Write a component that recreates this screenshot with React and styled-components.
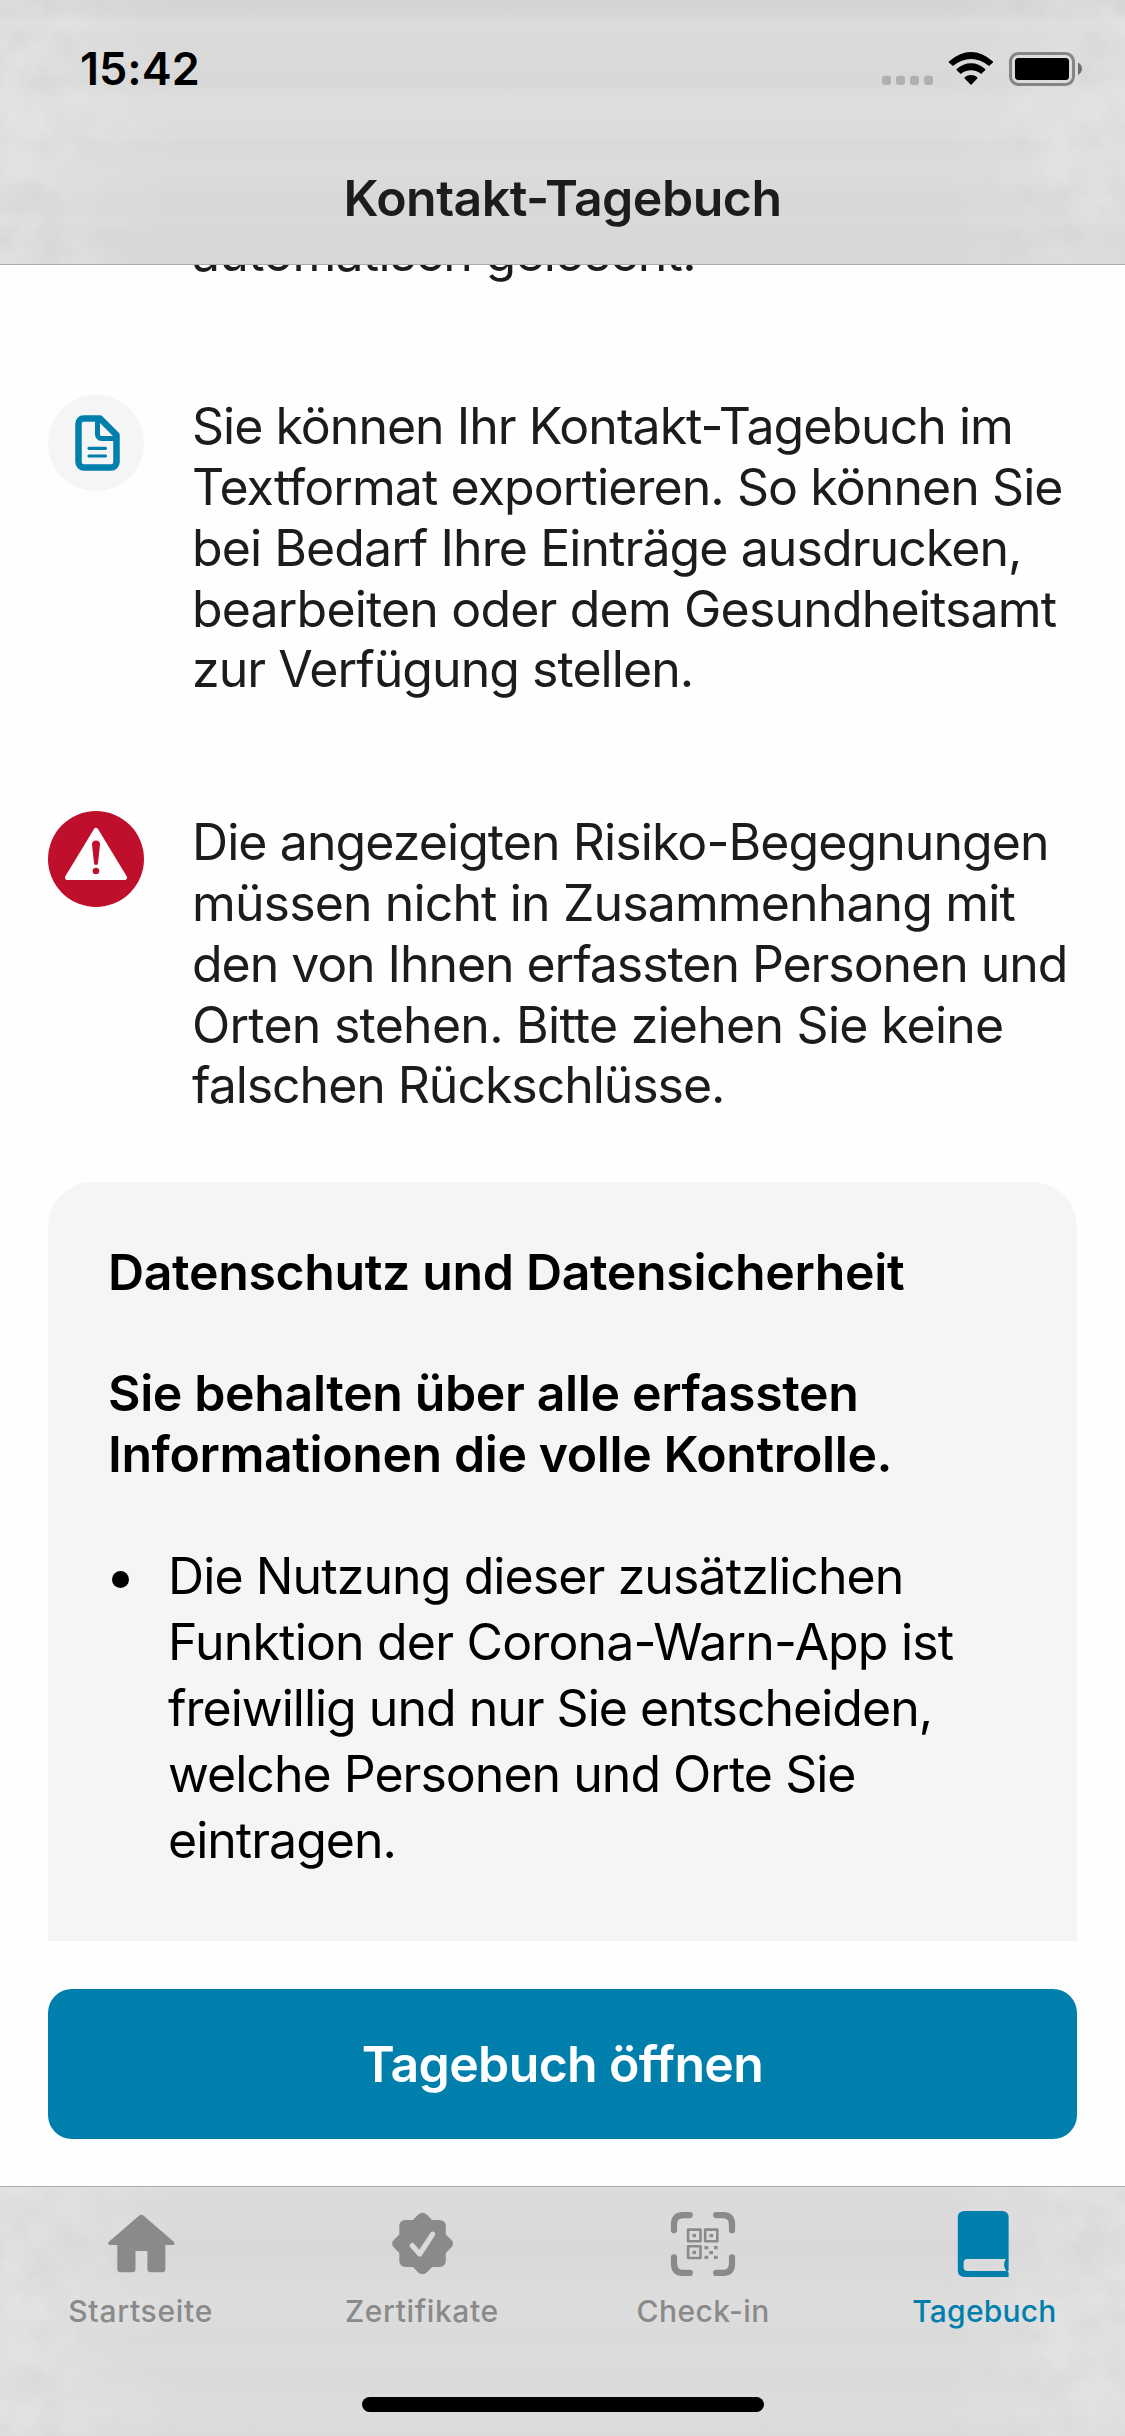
import React from "react";
import styled, { createGlobalStyle } from "styled-components";

const Global = createGlobalStyle`
  * { box-sizing: border-box; }
  body {
    margin: 0; background: #fff; font-family: Inter, "Liberation Sans", sans-serif;
    font-variant-ligatures: none;
  }
`;
const Screen = styled.div`
  width: 1125px; height: 2436px; overflow: hidden;
  display: flex; flex-direction: column; background: #fefefe;
`;
const barStripes = `
  linear-gradient(180deg, #d4d4d4 0, #d5d5d5 13px, #dcdcdc 22px, #dbdbdb 30px, #d9d9d9 36px, #dadada 62px,
    #d8d8d8 82px, #dedede 98px, #dcdcdc 138px, #dadada 142px, #dcdcdc 172px, #d8d8d8 196px, #d8d8d8 210px,
    #dadada 220px, #d7d7d7 232px, #d8d8d8 264px)`;
const Header = styled.header`
  position: relative; height: 265px; flex: none; display: flex; flex-direction: column;
  background: ${barStripes}; border-bottom: 1px solid #acacac;
`;
const GrainLayer = styled.svg`
  position: absolute; inset: 0; width: 100%; height: 100%; opacity: 0.4;
`;
const StatusBar = styled.div`
  position: relative; height: 132px; flex: none; padding: 50px 42px 0 80px;
  display: flex; align-items: flex-start; justify-content: space-between;
`;
const Clock = styled.span`
  font-size: 45px; line-height: 38px; font-weight: 600; color: #000;
  letter-spacing: ${(p) => p.$ls}px;
`;
const StatusIcons = styled.svg`
  width: 201px; height: 38px; display: block;
`;
const Title = styled.h1`
  position: relative; margin: 0; height: 132px; text-align: center; color: #1a1c1d;
  font-size: 50px; line-height: 132px; font-weight: 600; letter-spacing: ${(p) => p.$ls}px;
`;
const Content = styled.main`
  height: 1676px; flex: none; overflow: hidden; padding: 0 48px;
  display: flex; flex-direction: column;
`;
const Entry = styled.section`
  display: flex; gap: 48px; flex: none; margin-top: ${(p) => p.$top}px; height: ${(p) => p.$height}px;
`;
const IconSlot = styled.div`
  width: 96px; flex: none;
  svg { display: block; width: 96px; height: 96px; }
`;
const Lines = styled.div`
  display: flex; flex-direction: column; padding-top: ${(p) => p.$pad || 0}px;
`;
const Line = styled.span`
  display: block; white-space: pre; color: ${(p) => p.$color || "#1a1c1d"};
  font-size: 50px; font-weight: ${(p) => p.$weight || 400};
  line-height: ${(p) => p.$lh || 60.86}px; letter-spacing: ${(p) => p.$ls || 0}px;
`;
const Card = styled.section`
  flex: none; margin-top: 65px; height: 900px; padding: 60px 60px 0; border-radius: 45px; background: #f5f5f5;
  display: flex; flex-direction: column; gap: 60px;
`;
const Bullet = styled.div`
  display: grid; grid-template-columns: 60px 1fr; margin-top: -2px;
`;
const Dot = styled.i`
  width: 17px; height: 17px; border-radius: 50%; background: #000; margin: 28px 0 0 4px;
`;
const Footer = styled.div`
  height: 245px; flex: none; padding: 48px 48px 0;
`;
const Action = styled.button`
  display: block; width: 100%; height: 150px; border: 0; border-radius: 24px; padding: 0;
  background: #007fad; color: #fff; font: 600 50px/150px Inter, "Liberation Sans", sans-serif;
  font-variant-ligatures: none; letter-spacing: ${(p) => p.$ls}px;
`;
const TabBar = styled.nav`
  position: relative; height: 250px; flex: none; border-top: 1px solid #acacac;
  display: flex; flex-direction: column; align-items: center;
  background: linear-gradient(180deg, #dcdcdc 0, #dadada 15px, #dbdbdb 40px, #d8d8d8 60px, #dadada 85px,
    #dddddd 120px, #dadada 150px, #dcdcdc 165px, #dadada 190px, #dddddd 225px, #dadada 249px);
`;
const Tabs = styled.div`
  position: relative; width: 100%; height: 210px; display: grid; grid-template-columns: repeat(4, 281.25px);
`;
const Tab = styled.div`
  display: flex; flex-direction: column; align-items: center; padding-top: 18px;
  color: ${(p) => (p.$active ? "#007fad" : "#8a8a8a")};
  svg { width: 78px; height: 78px; display: block; }
`;
const TabLabel = styled.span`
  margin-top: 10px; font-size: 30px; line-height: 36px; font-weight: 500; letter-spacing: ${(p) => p.$ls}px;
`;
const HomeIndicator = styled.div`
  position: relative; width: 402px; height: 15px; border-radius: 8px; background: #000;
`;

function Grain({ id, height }) {
  return (
    <GrainLayer viewBox={`0 0 1125 ${height}`} preserveAspectRatio="none" aria-hidden="true">
      <defs>
        <filter id={`${id}-noise`} x="0" y="0" width="100%" height="100%">
          <feTurbulence type="fractalNoise" baseFrequency="0.028" numOctaves="3" seed="7" />
          <feColorMatrix values="0 0 0 0 0.91  0 0 0 0 0.91  0 0 0 0 0.91  1.5 0 0 0 -0.35" />
        </filter>
        <linearGradient id={`${id}-fade`}>
          <stop offset="0" stopColor="#fff" />
          <stop offset="0.06" stopColor="#fff" stopOpacity="0.85" />
          <stop offset="0.16" stopColor="#fff" stopOpacity="0" />
          <stop offset="0.84" stopColor="#fff" stopOpacity="0" />
          <stop offset="0.94" stopColor="#fff" stopOpacity="0.85" />
          <stop offset="1" stopColor="#fff" />
        </linearGradient>
        <mask id={`${id}-mask`}>
          <rect width="1125" height={height} fill={`url(#${id}-fade)`} />
        </mask>
      </defs>
      <g mask={`url(#${id}-mask)`}>
        <rect width="1125" height={height} filter={`url(#${id}-noise)`} />
      </g>
    </GrainLayer>
  );
}

const DocumentIcon = () => (
  <svg viewBox="0 0 96 96">
    <circle cx="48" cy="48" r="48" fill="#f5f5f5" />
    <path d="M35.500 23.500H52L68.500 40V67a5.500 5.500 0 0 1-5.500 5.500H36a5.500 5.500 0 0 1-5.500-5.500V28.500a5 5 0 0 1 5-5Z" fill="none" stroke="#007fad" strokeWidth="6.500" strokeLinejoin="round" />
    <path d="M49.500 24V39.500a4 4 0 0 0 4 4H69" fill="none" stroke="#007fad" strokeWidth="5" />
    <path d="M41 53.300H57.500M41 61H57.500" stroke="#007fad" strokeWidth="3.200" strokeLinecap="round" />
  </svg>
);
const WarningIcon = () => (
  <svg viewBox="0 0 96 96">
    <circle cx="48" cy="48" r="48" fill="#c00f2d" />
    <path d="M48 19.500 76.500 66.500H19.500Z" fill="#fff" stroke="#fff" strokeWidth="5" strokeLinejoin="round" />
    <path d="M44 33.500a4 4 0 0 1 8 0L50 52a2 2 0 0 1-4 0Z" fill="#c00f2d" />
    <circle cx="48" cy="60" r="3.300" fill="#c00f2d" />
  </svg>
);
const HomeIcon = () => (
  <svg viewBox="0 0 78 78" fill="currentColor">
    <path d="M37.300 10.600a3 3 0 0 1 4 0L71.500 36.500c1.800 1.700.900 3.500-1 3.500H63.300V64a3.200 3.200 0 0 1-3.200 3.200H48.600A3.200 3.200 0 0 1 45.400 64V46H33.500V64a3.200 3.200 0 0 1-3.200 3.200H18.500A3.200 3.200 0 0 1 15.300 64V40H8.200c-2 0-2.800-2-1-3.500Z" />
  </svg>
);
const CertificateIcon = () => (
  <svg viewBox="0 0 78 78">
    <path fill="currentColor" d="M35 9.700Q39.500 5.800 44 9.700L49 15H56.500Q62.800 15 62.800 21.500V29.500L68 34.500Q72 38.500 68 42.800L62.800 48V55.500Q62.800 62 56.500 62H49L44 67.300Q39.500 71.200 35 67.300L30 62H22.600Q16.300 62 16.300 55.500V48L11.200 42.800Q7.200 38.500 11.200 34.500L16.300 29.500V21.500Q16.300 15 22.600 15H30Z" />
    <path d="M29.300 40.600 36.700 49 49.500 29.300" fill="none" stroke="#dadada" strokeWidth="5.200" strokeLinecap="round" strokeLinejoin="round" />
  </svg>
);
const ScanIcon = () => (
  <svg viewBox="0 0 78 78" fill="none" stroke="currentColor">
    <path strokeWidth="6.200" strokeLinecap="round" d="M10 25.200V19.500Q10 10.100 19 10.100H25.800M52.100 10.100H59Q68 10.100 68 19.500V25.200M10 52.400V58.500Q10 67.900 19 67.900H25.800M52.100 67.900H59Q68 67.900 68 58.500V52.400" />
    <path strokeWidth="2.600" strokeLinejoin="round" d="M24.100 24.600h12.400v11.600H24.100zM41.200 24.600h12.100v11.600H41.200zM24.100 41.300h12.400v11.700H24.100z" />
    <path stroke="none" fill="currentColor" d="M28.500 29h3.600v3.300h-3.600zM45.500 29h3.600v3.300h-3.600zM28.500 45.700h3.600v3.300h-3.600zM40.500 41h3.700v3.300h-3.700zM50 41h3.700v3.300H50zM45.300 46h3.700v3.300h-3.700zM40.500 50.800h3.700v3.300h-3.700zM50 50.800h3.700v3.300H50z" />
  </svg>
);
const BookIcon = () => (
  <svg viewBox="0 0 78 78">
    <path fill="currentColor" fillRule="evenodd" d="M19.500 6H57Q63.600 6 63.600 12.500V65.800Q61.800 66.500 63.600 67.500V72H19.500Q12.800 72 12.800 65.500V12.500Q12.800 6 19.500 6ZM22.500 54Q18.600 54 18.600 57.500V62Q18.600 66 22.500 66H61.300Q57 60 60.700 54Z" />
  </svg>
);

const paragraphs = {
  export: [
    ["Sie können Ihr Kontakt-Tagebuch im", -0.98],
    ["Textformat exportieren. So können Sie", -0.92],
    ["bei Bedarf Ihre Einträge ausdrucken,", -0.92],
    ["bearbeiten oder dem Gesundheitsamt", -0.83],
    ["zur Verfügung stellen.", -0.95],
  ],
  risk: [
    ["Die angezeigten Risiko-Begegnungen", -0.92],
    ["müssen nicht in Zusammenhang mit", -0.87],
    ["den von Ihnen erfassten Personen und", -1.06],
    ["Orten stehen. Bitte ziehen Sie keine", -0.75],
    ["falschen Rückschlüsse.", -1.05],
  ],
  privacy: [
    ["Die Nutzung dieser zusätzlichen", -0.9],
    ["Funktion der Corona-Warn-App ist", -0.82],
    ["freiwillig und nur Sie entscheiden,", -1.0],
    ["welche Personen und Orte Sie", -0.98],
    ["eintragen.", -0.98],
  ],
};
const tabs = [
  ["Startseite", HomeIcon, 0.7],
  ["Zertifikate", CertificateIcon, 0.6],
  ["Check-in", ScanIcon, 0.45],
  ["Tagebuch", BookIcon, 0.2],
];

const Paragraph = ({ lines, pad, ...rest }) => (
  <Lines $pad={pad}>
    {lines.map(([text, ls]) => (
      <Line key={text} $ls={ls} {...rest}>{text}</Line>
    ))}
  </Lines>
);

export default function App() {
  return (
    <Screen>
      <Global />
      <Header>
        <Grain id="top" height={264} />
        <StatusBar>
          <Clock $ls={0}>15:42</Clock>
          <StatusIcons viewBox="0 0 201 38">
            <g fill="#b0b0b0">
              {[0, 14, 28, 42].map((x) => <rect key={x} x={x} y="25.800" width="9" height="9.200" rx="3" />)}
            </g>
            <path transform="translate(2.200 0) scale(1.046 1)" fill="#000" d="M61.800 11.500Q72 1.900 83 1.900T104 11.500Q104.300 12 104 12.500L100.200 16Q92 8.900 83 8.900T65.700 16L61.800 12.500Q61.400 12 61.800 11.500ZM69.300 19Q75.500 13.300 83 13.300T96.500 19Q96.900 19.600 96.500 20.200L92.600 24Q88.500 20.300 83 20.300T73.200 24L69.300 20.200Q68.900 19.600 69.300 19ZM76.900 27.300Q79.500 25 83 25T89 27.300Q89.300 28 89 28.600L83 35 76.900 28.600Q76.500 28 76.900 27.300Z" />
            <rect x="128.500" y="3.500" width="63" height="31" rx="8" fill="none" stroke="#858585" strokeWidth="3" />
            <rect x="133" y="8" width="54" height="22" rx="3.500" fill="#000" />
            <path d="M196 12.500q4 2.500 4 6.300T196 25Z" fill="#6f6f6f" />
          </StatusIcons>
        </StatusBar>
        <Title $ls={-0.5}>Kontakt-Tagebuch</Title>
      </Header>
      <Content>
        <Entry $top={-42} $height={61}>
          <IconSlot />
          <Line $ls={-0.75}>automatisch gelöscht.</Line>
        </Entry>
        <Entry $top={111} $height={306}>
          <IconSlot><DocumentIcon /></IconSlot>
          <Paragraph pad={1} lines={paragraphs.export} />
        </Entry>
        <Entry $top={110} $height={306}>
          <IconSlot><WarningIcon /></IconSlot>
          <Paragraph pad={1} lines={paragraphs.risk} />
        </Entry>
        <Card>
          <Line $weight={600} $color="#000" $ls={-0.35}>Datenschutz und Datensicherheit</Line>
          <Lines>
            <Line $weight={600} $color="#000" $ls={-0.37}>Sie behalten über alle erfassten</Line>
            <Line $weight={600} $color="#000" $ls={-0.41}>Informationen die volle Kontrolle.</Line>
          </Lines>
          <Bullet>
            <Dot />
            <Paragraph lines={paragraphs.privacy} $color="#000" $lh={66} />
          </Bullet>
        </Card>
      </Content>
      <Footer>
        <Action $ls={-0.64}>Tagebuch öffnen</Action>
      </Footer>
      <TabBar>
        <Grain id="bottom" height={249} />
        <Tabs>
          {tabs.map(([label, Icon, ls], i) => (
            <Tab key={label} $active={i === 3}>
              <Icon />
              <TabLabel $ls={ls}>{label}</TabLabel>
            </Tab>
          ))}
        </Tabs>
        <HomeIndicator />
      </TabBar>
    </Screen>
  );
}
